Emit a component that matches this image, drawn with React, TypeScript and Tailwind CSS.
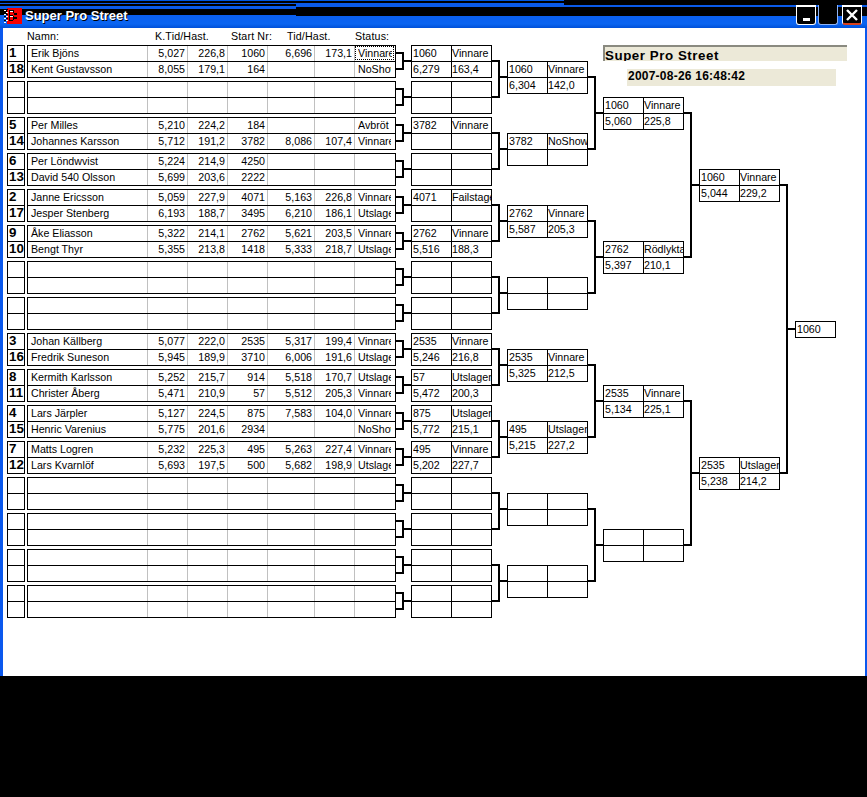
import React from 'react';

type Racer = [string, string, string, string, string, string, string, string];
type Pair = [Racer, Racer] | null;
type Box = [string, string, string, string];

const blankBox: Box = ['', '', '', ''];

const firstRound: Pair[] = [
  [['1', 'Erik Bjöns', '5,027', '226,8', '1060', '6,696', '173,1', 'Vinnare'], ['18', 'Kent Gustavsson', '8,055', '179,1', '164', '', '', 'NoShow']],
  null,
  [['5', 'Per Milles', '5,210', '224,2', '184', '', '', 'Avbröt'], ['14', 'Johannes Karsson', '5,712', '191,2', '3782', '8,086', '107,4', 'Vinnare']],
  [['6', 'Per Löndwvist', '5,224', '214,9', '4250', '', '', ''], ['13', 'David 540 Olsson', '5,699', '203,6', '2222', '', '', '']],
  [['2', 'Janne Ericsson', '5,059', '227,9', '4071', '5,163', '226,8', 'Vinnare'], ['17', 'Jesper Stenberg', '6,193', '188,7', '3495', '6,210', '186,1', 'Utslagen']],
  [['9', 'Åke Eliasson', '5,322', '214,1', '2762', '5,621', '203,5', 'Vinnare'], ['10', 'Bengt Thyr', '5,355', '213,8', '1418', '5,333', '218,7', 'Utslagen']],
  null,
  null,
  [['3', 'Johan Källberg', '5,077', '222,0', '2535', '5,317', '199,4', 'Vinnare'], ['16', 'Fredrik Suneson', '5,945', '189,9', '3710', '6,006', '191,6', 'Utslagen']],
  [['8', 'Kermith Karlsson', '5,252', '215,7', '914', '5,518', '170,7', 'Utslagen'], ['11', 'Christer Åberg', '5,471', '210,9', '57', '5,512', '205,3', 'Vinnare']],
  [['4', 'Lars Järpler', '5,127', '224,5', '875', '7,583', '104,0', 'Vinnare'], ['15', 'Henric Varenius', '5,775', '201,6', '2934', '', '', 'NoShow']],
  [['7', 'Matts Logren', '5,232', '225,3', '495', '5,263', '227,4', 'Vinnare'], ['12', 'Lars Kvarnlöf', '5,693', '197,5', '500', '5,682', '198,9', 'Utslagen']],
  null,
  null,
  null,
  null,
];

const round2: Box[] = [
  ['1060', 'Vinnare', '6,279', '163,4'],
  blankBox,
  ['3782', 'Vinnare', '', ''],
  blankBox,
  ['4071', 'Failstage', '', ''],
  ['2762', 'Vinnare', '5,516', '188,3'],
  blankBox,
  blankBox,
  ['2535', 'Vinnare', '5,246', '216,8'],
  ['57', 'Utslagen', '5,472', '200,3'],
  ['875', 'Utslagen', '5,772', '215,1'],
  ['495', 'Vinnare', '5,202', '227,7'],
  blankBox,
  blankBox,
  blankBox,
  blankBox,
];

const round3: Box[] = [
  ['1060', 'Vinnare', '6,304', '142,0'],
  ['3782', 'NoShow', '', ''],
  ['2762', 'Vinnare', '5,587', '205,3'],
  blankBox,
  ['2535', 'Vinnare', '5,325', '212,5'],
  ['495', 'Utslagen', '5,215', '227,2'],
  blankBox,
  blankBox,
];

const round4: Box[] = [
  ['1060', 'Vinnare', '5,060', '225,8'],
  ['2762', 'Rödlykta', '5,397', '210,1'],
  ['2535', 'Vinnare', '5,134', '225,1'],
  blankBox,
];

const round5: Box[] = [
  ['1060', 'Vinnare', '5,044', '229,2'],
  ['2535', 'Utslagen', '5,238', '214,2'],
];

const FONT = "font-['Liberation_Sans',Arial,sans-serif]";

const Clip: React.FC<{ children: React.ReactNode; className?: string }> = ({ children, className = '' }) => (
  <div className={`h-full overflow-hidden whitespace-nowrap ${className}`}>{children}</div>
);

const RacerRow: React.FC<{ racer?: Racer; focused?: boolean; first: boolean }> = ({ racer, focused, first }) => {
  const cell = 'border-l border-[#c0c0c0] h-[15px] leading-[15px]';
  return (
    <div className={`grid grid-cols-[119px_40px_40px_40px_47px_40px_41px] ${first ? 'h-[15px]' : 'h-[16px] border-t border-black'}`}>
      <div className="pl-[3px] h-[15px] leading-[15px] whitespace-nowrap overflow-hidden">{racer?.[1]}</div>
      <div className={`${cell} text-right pr-[2px]`}>{racer?.[2]}</div>
      <div className={`${cell} text-right pr-[2px]`}>{racer?.[3]}</div>
      <div className={`${cell} text-right pr-[2px]`}>{racer?.[4]}</div>
      <div className={`${cell} text-right pr-[2px]`}>{racer?.[5]}</div>
      <div className={`${cell} text-right pr-[2px]`}>{racer?.[6]}</div>
      <div className={`${cell} pl-[3px] pr-[4px]`}>
        {focused ? (
          <div className="-ml-[3px] -mr-[3px] h-[14px] border border-dotted border-black pl-[2px] pr-[1px] leading-[13px]">
            <Clip>{racer?.[7]}</Clip>
          </div>
        ) : (
          <Clip>{racer?.[7]}</Clip>
        )}
      </div>
    </div>
  );
};

const FirstRoundPair: React.FC<{ pair: Pair; index: number }> = ({ pair, index }) => (
  <div className="flex gap-[2px]">
    <div className="w-[18px] h-[33px] border border-black flex flex-col font-bold text-[13.33px] leading-[14px]">
      <div className="h-[15px] pl-[1px]">{pair?.[0][0]}</div>
      <div className="h-[16px] pl-[1px] border-t border-black">{pair?.[1][0]}</div>
    </div>
    <div className="w-[369px] h-[33px] border border-black">
      <RacerRow racer={pair?.[0]} focused={index === 0} first />
      <RacerRow racer={pair?.[1]} first={false} />
    </div>
  </div>
);

const BracketBox: React.FC<{ box: Box }> = ({ box }) => (
  <div className="w-[81px] h-[33px] shrink-0 border border-black grid grid-cols-[40px_39px] grid-rows-[15px_16px] leading-[14px]">
    <div className="pl-[1px] border-r border-black w-[40px]"><Clip>{box[0]}</Clip></div>
    <div className="pl-0"><Clip>{box[1]}</Clip></div>
    <div className="pl-[1px] border-r border-t border-black w-[40px]"><Clip>{box[2]}</Clip></div>
    <div className="border-t border-black"><Clip>{box[3]}</Clip></div>
  </div>
);

// connector lines between the rounds, in page coordinates
const Connectors: React.FC = () => {
  const lines: string[] = [];
  for (let i = 0; i < 16; i++) {
    const y = 45 + i * 36;
    lines.push(`M396 ${y + 8}H403V${y + 24}H396M403 ${y + 16}H411`);
  }
  for (let i = 0; i < 8; i++) {
    const y = 61 + i * 72;
    lines.push(`M492 ${y}H499V${y + 36}H492M499 ${y + 16}H507`);
  }
  for (let i = 0; i < 4; i++) {
    const y = 77 + i * 144;
    lines.push(`M588 ${y}H595V${y + 72}H588M595 ${y + 36}H603`);
  }
  for (let i = 0; i < 2; i++) {
    const y = 113 + i * 288;
    lines.push(`M684 ${y}H691V${y + 144}H684M691 ${y + 72}H699`);
  }
  lines.push('M780 185H787V473H780M787 329H795');
  return (
    <svg className="absolute top-0 left-0 pointer-events-none" width="867" height="676" shapeRendering="crispEdges">
      <path d={lines.join('')} fill="none" stroke="#000" strokeWidth="2" />
    </svg>
  );
};

const AppIcon: React.FC = () => (
  <svg width="18" height="18" viewBox="0 0 18 18" className="shrink-0" shapeRendering="crispEdges">
    <rect x="3" y="1" width="15" height="16" fill="#f60000" />
    <path d="M0 3h2v1H0zM2 5h2v1H2zM0 7h2v1H0zM2 9h2v1H2zM0 11h2v1H0zM2 13h2v1H2zM0 15h2v1H0z" fill="#fff" />
    <path d="M2 2h2v1H2zM0 5h2v1H0zM2 7h2v1H2zM0 9h2v1H0zM2 11h2v1H2zM0 13h2v1H0z" fill="#000" />
    <path d="M5 3h4v1H5zM5 3h1v11H5zM9 3h1v3H9zM5 8h4v1H5zM9 9h1v4H9zM5 13h4v1H5zM10 6h3v2h-3zM10 10h3v2h-3z" fill="#000" />
    <path d="M6 4h3v1H6zM6 9h3v1H6z" fill="#fff" />
  </svg>
);

const TitleBar: React.FC = () => (
  <div
    className="h-[28px] shrink-0 flex items-center pl-[4px] pr-[5px] relative [background:linear-gradient(#000,#000)_564px_0/100%_5px_no-repeat,linear-gradient(#0057e0_0,#0057e0_1px,#000_1px,#000_3px,#0a5ae8_3px,#0a5ae8_4px,#000_4px,#000_6px,#0a5ae8_6px,#0a5ae8_9px,#000_9px,#000_15px,#0a5ff0_15px,#0a64f0_24px,#0050d8_28px)_0_0/296px_100%_no-repeat,linear-gradient(#0057e0_0,#0057e0_1px,#000_1px,#000_3px,#0a5ae8_3px,#0a5ae8_5px,#0a5ae8_5px,#0a5ae8_7px,#000_7px,#000_16px,#0a5ff0_16px,#0a64f0_24px,#0050d8_28px)]"
  >
    <div className="mt-[3px]"><AppIcon /></div>
    <span className={`ml-[3px] mt-[4px] font-bold text-white text-[13px] [text-shadow:1px_1px_0_#000] ${FONT}`}>Super Pro Street</span>
    <div className="ml-auto flex items-start gap-[2px] mt-[2px]">
      <div className="w-[20px] h-[20px] bg-black border border-t-2 border-white rounded-b-[3px] relative">
        <div className="absolute left-[6px] bottom-[3px] w-[7px] h-[3px] bg-white" />
      </div>
      <div className="w-[20px] h-[20px] bg-black border-x border-b border-[#8fb4f5] rounded-b-[3px]" />
      <div className="ml-[2px] w-[20px] h-[20px] bg-black border-x border-t-2 border-white border-b-2 border-b-[#d9401a] rounded-b-[3px] flex items-center justify-center">
        <svg width="14" height="14" viewBox="0 0 14 14">
          <path d="M2 2L12 12M12 2L2 12" stroke="#fff" strokeWidth="2.4" fill="none" />
        </svg>
      </div>
    </div>
  </div>
);

export default function App() {
  return (
    <div className={`relative w-[867px] h-[797px] bg-black text-black text-[10.67px] overflow-hidden ${FONT}`}>
      <div className="h-[676px] flex flex-col">
        <TitleBar />
        <div className="flex-1 bg-white border-l-[3px] border-r-[2px] border-[#0a58ee]">
          <div className="h-[17px] flex pl-[24px] pt-[1px] leading-[14px] tracking-[0.15px]">
            <div className="w-[128px]">Namn:</div>
            <div className="w-[76px]">K.Tid/Hast.</div>
            <div className="w-[56px]">Start Nr:</div>
            <div className="w-[68px]">Tid/Hast.</div>
            <div>Status:</div>
          </div>
          <div className="flex pl-[4px] gap-[15px]">
            <div className="flex flex-col gap-[3px] shrink-0">
              {firstRound.map((pair, i) => (
                <FirstRoundPair key={i} pair={pair} index={i} />
              ))}
            </div>
            <div className="flex flex-col gap-[3px] shrink-0">
              {round2.map((box, i) => <BracketBox key={i} box={box} />)}
            </div>
            <div className="flex flex-col gap-[39px] pt-[16px] shrink-0">
              {round3.map((box, i) => <BracketBox key={i} box={box} />)}
            </div>
            <div className="w-[81px] shrink-0 flex flex-col">
              <div className="w-[244px] h-[16px] shrink-0 bg-[#ece9d8] border-t-2 border-l-2 border-[#8a8a80] overflow-hidden font-bold text-[13.33px] leading-[17px] tracking-[0.55px]">
                Super Pro Street
              </div>
              <div className="ml-[24px] mt-[8px] w-[209px] h-[17px] shrink-0 bg-[#ece9d8] font-bold text-[12px] leading-[14px] tracking-[0.23px] pl-[1px]">
                2007-08-26 16:48:42
              </div>
              <div className="mt-[11px] flex flex-col gap-[111px]">
                {round4.map((box, i) => <BracketBox key={i} box={box} />)}
              </div>
            </div>
            <div className="flex flex-col gap-[255px] pt-[124px] shrink-0">
              {round5.map((box, i) => <BracketBox key={i} box={box} />)}
            </div>
            <div className="pt-[276px] shrink-0">
              <div className="w-[41px] h-[17px] border border-black pl-[1px] leading-[14px]">1060</div>
            </div>
          </div>
        </div>
      </div>
      <Connectors />
    </div>
  );
}
